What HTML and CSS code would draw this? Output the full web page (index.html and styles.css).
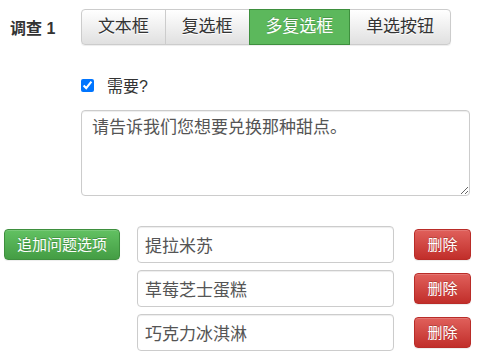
FILE: index.html
```html
<!DOCTYPE html>
<html lang="zh-CN">
<head>
<meta charset="utf-8">
<title>调查</title>
<link rel="stylesheet" href="styles.css">
</head>
<body>
<div class="survey">
  <div class="survey-head">
    <div class="survey-label">调查 1</div>
    <div class="btn-group">
      <button class="seg">文本框</button>
      <button class="seg">复选框</button>
      <button class="seg active">多复选框</button>
      <button class="seg">单选按钮</button>
    </div>
  </div>
  <div class="survey-body">
    <label class="check-row"><input type="checkbox" class="check" checked><span>需要?</span></label>
    <textarea class="question">请告诉我们您想要兑换那种甜点。</textarea>
  </div>
  <div class="options-area">
    <button class="btn btn-success">追加问题选项</button>
    <div class="options">
      <div class="option-row">
        <input class="option-input" type="text" value="提拉米苏">
        <button class="btn btn-danger">删除</button>
      </div>
      <div class="option-row">
        <input class="option-input" type="text" value="草莓芝士蛋糕">
        <button class="btn btn-danger">删除</button>
      </div>
      <div class="option-row">
        <input class="option-input" type="text" value="巧克力冰淇淋">
        <button class="btn btn-danger">删除</button>
      </div>
    </div>
  </div>
</div>
</body>
</html>
```

FILE: styles.css
```css
* { box-sizing: border-box; }
html, body { margin: 0; padding: 0; background: #fff; }
body {
  font-family: "Liberation Sans", "Noto Sans CJK SC", sans-serif;
  color: #333;
}
button, input, textarea { font-family: inherit; }

.survey { padding-top: 9px; }

.survey-head {
  display: flex;
  align-items: center;
}
.survey-label {
  width: 81px;
  padding-left: 10px;
  font-size: 16px;
  font-weight: bold;
  color: #333;
}
.btn-group {
  display: flex;
  border-radius: 4px;
  box-shadow: 0 1px 1px rgba(0,0,0,.075);
}
.seg {
  margin: 0;
  height: 36px;
  padding: 0 15.875px;
  font-size: 17px;
  line-height: 34px;
  color: #333;
  border: 1px solid #ccc;
  margin-left: -1px;
  background: linear-gradient(to bottom, #fff 0, #e0e0e0 100%);
  text-shadow: 0 1px 0 #fff;
  cursor: pointer;
}
.seg:first-child { margin-left: 0; border-radius: 4px 0 0 4px; }
.seg:last-child { border-radius: 0 4px 4px 0; }
.seg.active {
  position: relative;
  background: #5cb85c;
  border-color: #3e8f3e;
  color: #fff;
  text-shadow: 0 -1px 0 rgba(0,0,0,.2);
}

.survey-body {
  padding-left: 81px;
  padding-top: 28px;
  display: flex;
  flex-direction: column;
}
.check-row {
  display: flex;
  align-items: center;
  height: 24px;
  font-size: 16px;
  color: #333;
}
.check {
  width: 13px;
  height: 13px;
  margin: 0 13px 0 0;
}
.question {
  margin-top: 13px;
  width: 389px;
  height: 86px;
  padding: 5px 10px;
  font-size: 17px;
  line-height: 24px;
  color: #555;
  border: 1px solid #ccc;
  border-radius: 4px;
  box-shadow: inset 0 1px 1px rgba(0,0,0,.075);
  resize: vertical;
}

.options-area {
  display: flex;
  align-items: flex-start;
  padding-left: 4px;
  margin-top: 30px;
}
.btn {
  margin: 0;
  height: 31px;
  padding: 0 12px;
  font-size: 15px;
  line-height: 29px;
  color: #fff;
  border: 1px solid;
  border-radius: 4px;
  text-shadow: 0 -1px 0 rgba(0,0,0,.2);
  box-shadow: inset 0 1px 0 rgba(255,255,255,.15), 0 1px 1px rgba(0,0,0,.075);
  cursor: pointer;
  white-space: nowrap;
}
.btn-success {
  width: 116px;
  margin-top: 3px;
  background: linear-gradient(to bottom, #62c162 0, #449d44 100%);
  border-color: #3e8f3e;
}
.btn-danger {
  width: 57px;
  background: linear-gradient(to bottom, #e0605b 0, #c12e2a 100%);
  border-color: #b92c28;
}
.options {
  margin-left: 17px;
  display: flex;
  flex-direction: column;
  gap: 7px;
}
.option-row {
  display: flex;
  align-items: center;
  gap: 20px;
}
.option-input {
  width: 257px;
  height: 37px;
  padding: 0 7px;
  font-size: 17px;
  color: #555;
  border: 1px solid #ccc;
  border-radius: 4px;
  box-shadow: inset 0 1px 1px rgba(0,0,0,.075);
}
```
